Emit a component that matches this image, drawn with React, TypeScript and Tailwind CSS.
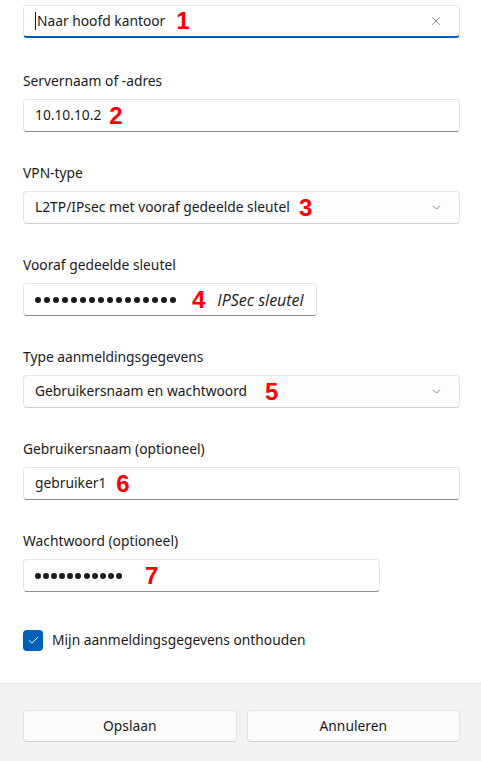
import React from "react";
import { X, ChevronDown, Check } from "lucide-react";

const font = { fontFamily: '"Segoe UI", "Noto Sans", sans-serif' };

const Num = ({ n, className = "" }: { n: string; className?: string }) => (
	<span
		className={`shrink-0 text-[24px] font-bold leading-none text-[#ff0000] ${className}`}
		style={{ fontFamily: '"Liberation Sans", Arial, sans-serif' }}
	>
		{n}
	</span>
);

const Dots = ({ count, gap }: { count: number; gap: string }) => (
	<span className={`flex shrink-0 items-center ${gap}`}>
		{Array.from({ length: count }).map((_, i) => (
			<span key={i} className="block h-[6px] w-[6px] shrink-0 rounded-full bg-[#1a1a1a]" />
		))}
	</span>
);

const Box = ({
	children,
	className = "",
}: {
	children: React.ReactNode;
	className?: string;
}) => (
	<div
		className={`flex h-[33px] items-center rounded-[4px] border border-[#e5e5e5] border-b-[#8a8a8a] bg-white px-[11px] ${className}`}
	>
		{children}
	</div>
);

const Select = ({ children }: { children: React.ReactNode }) => (
	<div className="flex h-[33px] items-center rounded-[4px] border border-[#e5e5e5] border-b-[#d0d0d0] bg-[#fdfdfd] pl-[11px] pr-[16px]">
		<div className="flex flex-1 items-center">{children}</div>
		<ChevronDown size={13} strokeWidth={1.3} className="text-[#5f5f5f]" />
	</div>
);

const Field = ({
	label,
	children,
}: {
	label: string;
	children: React.ReactNode;
}) => (
	<div className="flex flex-col">
		<div className="h-[20px] text-[13.8px] leading-[20px] text-[#1a1a1a]">{label}</div>
		<div className="mt-[8px]">{children}</div>
	</div>
);

export default function App() {
	return (
		<div className="flex h-[761px] w-[481px] flex-col bg-white text-[#1a1a1a]" style={font}>
			<div className="flex flex-1 flex-col gap-[31px] px-[23px] pt-[5px] pr-[21px] text-[13.8px]">
				{/* Naam */}
				<div className="mb-[2px] flex h-[33px] items-center rounded-[4px] border border-[#e5e5e5] border-b-2 border-b-[#005fb8] bg-white pl-[11px] pr-[16px]">
					<span className="mr-[1px] h-[18px] w-[1px] bg-[#1a1a1a]" />
					<span>Naar hoofd kantoor</span>
					<Num n="1" className="ml-[11px]" />
					<span className="flex-1" />
					<X size={14} strokeWidth={1.2} className="text-[#5f5f5f]" />
				</div>

				<Field label="Servernaam of -adres">
					<Box>
						<span>10.10.10.2</span>
						<Num n="2" className="ml-[8px]" />
					</Box>
				</Field>

				<Field label="VPN-type">
					<Select>
						<span>L2TP/IPsec met vooraf gedeelde sleutel</span>
						<Num n="3" className="ml-[9px]" />
					</Select>
				</Field>

				<Field label="Vooraf gedeelde sleutel">
					<Box className="w-[294px]">
						<Dots count={16} gap="gap-[3px]" />
						<Num n="4" className="ml-[16px]" />
						<span
							className="ml-[12px] shrink-0 whitespace-nowrap text-[16px] italic"
							style={{ fontFamily: '"Open Sans", "Noto Sans", sans-serif' }}
						>
							IPSec sleutel
						</span>
					</Box>
				</Field>

				<Field label="Type aanmeldingsgegevens">
					<Select>
						<span>Gebruikersnaam en wachtwoord</span>
						<Num n="5" className="ml-[18px]" />
					</Select>
				</Field>

				<Field label="Gebruikersnaam (optioneel)">
					<Box>
						<span>gebruiker1</span>
						<Num n="6" className="ml-[10px]" />
					</Box>
				</Field>

				<Field label="Wachtwoord (optioneel)">
					<Box className="w-[357px]">
						<Dots count={11} gap="gap-[2.1px]" />
						<Num n="7" className="ml-[23px]" />
					</Box>
				</Field>

				<div className="flex items-center gap-[9px] pt-[7px]">
					<span className="flex h-[21px] w-[20px] items-center justify-center rounded-[4px] bg-[#005fb8]">
						<Check size={13} strokeWidth={1.8} className="text-white" />
					</span>
					<span>Mijn aanmeldingsgegevens onthouden</span>
				</div>
			</div>

			<div className="flex h-[78px] gap-[10px] border-t border-dotted border-t-[#e0e0e0] bg-[#f3f3f3] px-[23px] pt-[26px] pr-[21px]">
				<button className="h-[32px] flex-1 rounded-[4px] border border-[#e5e5e5] border-b-[#d0d0d0] bg-[#fbfbfb] text-[13.8px]">
					Opslaan
				</button>
				<button className="h-[32px] flex-1 rounded-[4px] border border-[#e5e5e5] border-b-[#d0d0d0] bg-[#fbfbfb] text-[13.8px]">
					Annuleren
				</button>
			</div>
		</div>
	);
}
